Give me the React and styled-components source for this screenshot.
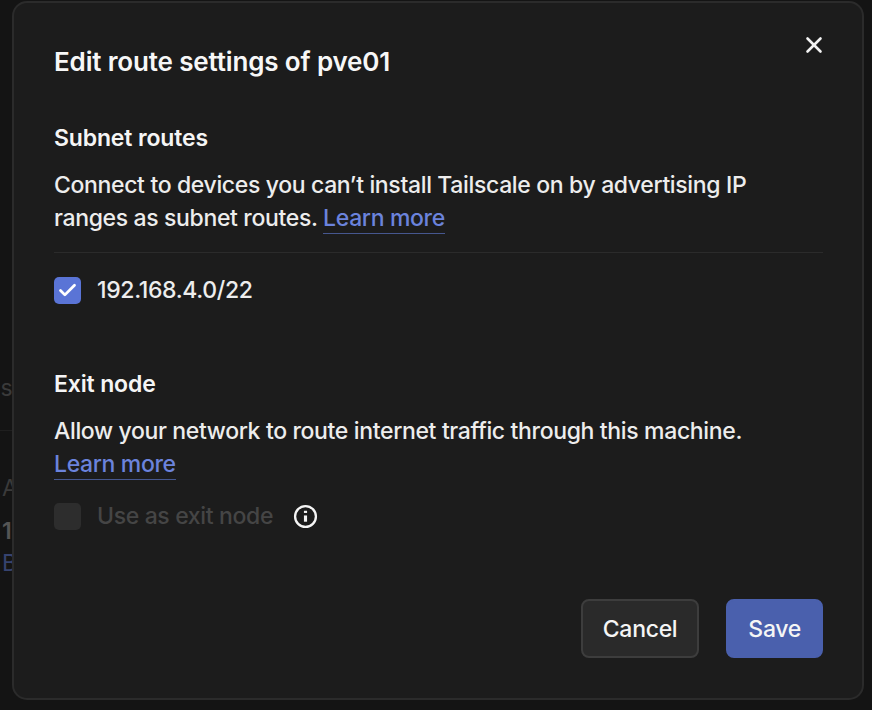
import React from 'react';
import styled, { createGlobalStyle } from 'styled-components';
import { X, Check } from 'lucide-react';

const GlobalStyle = createGlobalStyle`
  html, body {
    margin: 0;
    padding: 0;
    height: 100%;
    background: #141414;
    overflow: hidden;
  }
  body {
    font-family: Inter, "Liberation Sans", sans-serif;
    color: #f2f2f2;
  }
`;

const Page = styled.div`
  position: relative;
  width: 872px;
  height: 710px;
  overflow: hidden;
  background: #141414;
`;

const BackdropColumn = styled.div`
  display: flex;
  flex-direction: column;
  width: 12px;
  height: 100%;
  padding-top: 373px;
  box-sizing: border-box;
  overflow: hidden;
  font-size: 23px;
  line-height: 30px;
  white-space: nowrap;
`;

const BackdropText = styled.div`
  color: ${(p) => p.$color || '#3a3a3a'};
  margin-left: ${(p) => p.$shift || 0}px;
  margin-top: ${(p) => p.$gap || 0}px;
  font-weight: ${(p) => p.$weight || 400};
`;

const BackdropRule = styled.div`
  flex: none;
  height: 1px;
  margin-top: 27px;
  background: #1f1f1f;
`;

const Modal = styled.div`
  position: absolute;
  left: 12px;
  top: 1px;
  width: 852px;
  height: 699px;
  box-sizing: border-box;
  padding: 41px 39px 40px 40px;
  display: flex;
  flex-direction: column;
  background: #1c1c1c;
  border: 2px solid #2b2b2b;
  border-radius: 15px;
`;

const CloseButton = styled.button`
  position: absolute;
  top: 29px;
  right: 35px;
  padding: 0;
  display: flex;
  background: none;
  border: none;
  color: #f2f2f2;
`;

const Title = styled.h2`
  margin: 0;
  font-size: 26px;
  line-height: 36px;
  font-weight: 600;
  letter-spacing: -0.15px;
  color: #f7f7f7;
`;

const Section = styled.section`
  margin-top: ${(p) => p.$top}px;
`;

const SectionTitle = styled.h3`
  margin: 0;
  font-size: 23px;
  line-height: 30px;
  font-weight: 600;
  letter-spacing: -0.15px;
  color: #f5f5f5;
`;

const Body = styled.p`
  margin: 16px 0 0;
  font-size: 23px;
  line-height: 33px;
  font-weight: 450;
  letter-spacing: -0.35px;
  color: #ededed;
`;

const LearnMore = styled.a`
  color: #6b83dc;
  border-bottom: 1.5px solid #46578f;
  padding-bottom: 1px;
`;

const Divider = styled.hr`
  margin: 17px 0 0;
  border: none;
  height: 1px;
  background: #2b2b2b;
`;

const OptionRow = styled.div`
  display: flex;
  align-items: center;
  margin-top: ${(p) => p.$top}px;
  height: 30px;
`;

const Box = styled.span`
  width: 27px;
  height: 27px;
  box-sizing: border-box;
  display: flex;
  align-items: center;
  justify-content: center;
  border-radius: 5px;
  color: #fff;
  background: ${(p) => (p.$checked ? '#5a74d6' : '#2d2d2d')};
`;

const OptionLabel = styled.span`
  margin-left: 16px;
  font-size: 23px;
  font-weight: 450;
  letter-spacing: -0.35px;
  color: ${(p) => (p.$disabled ? '#454545' : '#ededed')};
`;

const InfoIcon = styled.svg`
  margin-left: 20px;
  width: 25px;
  height: 25px;
`;

const Footer = styled.div`
  margin-top: auto;
  display: flex;
  justify-content: flex-end;
  gap: 27px;
`;

const Button = styled.button`
  height: 59px;
  padding: 0 20px;
  box-sizing: border-box;
  font-family: inherit;
  font-size: 23px;
  font-weight: 500;
  letter-spacing: -0.3px;
  border-radius: 8px;
  color: #f5f5f5;
  background: ${(p) => (p.$primary ? '#4a60ad' : '#2a2a2a')};
  border: 2px solid ${(p) => (p.$primary ? '#4a60ad' : '#3d3d3d')};
`;

export default function App() {
  return (
    <Page>
      <GlobalStyle />
      <BackdropColumn>
        <BackdropText $shift={-13}>es</BackdropText>
        <BackdropRule />
        <BackdropText $gap={42} $shift={2}>A</BackdropText>
        <BackdropText $gap={13} $shift={2} $color="#555" $weight={600}>1</BackdropText>
        <BackdropText $gap={2} $shift={2} $color="#36436f">B</BackdropText>
      </BackdropColumn>
      <Modal>
        <CloseButton aria-label="Close">
          <X size={26} strokeWidth={2.4} />
        </CloseButton>
        <Title>Edit route settings of pve01</Title>
        <Section $top={43}>
          <SectionTitle>Subnet routes</SectionTitle>
          <Body>
            Connect to devices you can’t install Tailscale on by advertising IP
            <br />
            ranges as subnet routes. <LearnMore>Learn more</LearnMore>
          </Body>
          <Divider />
          <OptionRow $top={22}>
            <Box $checked>
              <Check size={21} strokeWidth={3.2} />
            </Box>
            <OptionLabel>192.168.4.0/22</OptionLabel>
          </OptionRow>
        </Section>
        <Section $top={64}>
          <SectionTitle>Exit node</SectionTitle>
          <Body>
            Allow your network to route internet traffic through this machine.
            <br />
            <LearnMore>Learn more</LearnMore>
          </Body>
          <OptionRow $top={20}>
            <Box />
            <OptionLabel $disabled>Use as exit node</OptionLabel>
            <InfoIcon viewBox="0 0 24 24" fill="none" stroke="#f5f5f5" strokeWidth="2.2" strokeLinecap="round">
              <circle cx="12" cy="12" r="10" />
              <line x1="12" y1="11" x2="12" y2="17" strokeWidth="3" strokeLinecap="butt" />
              <line x1="12" y1="6.5" x2="12" y2="8.6" strokeWidth="3" strokeLinecap="butt" />
            </InfoIcon>
          </OptionRow>
        </Section>
        <Footer>
          <Button>Cancel</Button>
          <Button $primary>Save</Button>
        </Footer>
      </Modal>
    </Page>
  );
}
